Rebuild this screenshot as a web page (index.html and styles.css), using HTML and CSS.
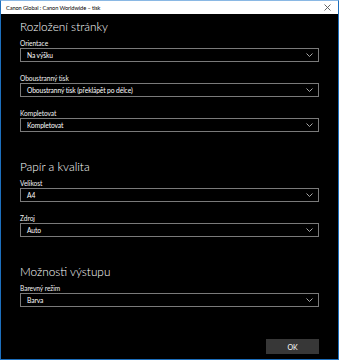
FILE: index.html
```html
<!DOCTYPE html>
<html lang="cs">
<head>
<meta charset="utf-8">
<title>Canon Global : Canon Worldwide – tisk</title>
<link rel="stylesheet" href="styles.css">
</head>
<body>
<div class="window">
  <div class="titlebar">
    <span class="title">Canon Global : Canon Worldwide – tisk</span>
    <svg class="close" width="7" height="7" viewBox="0 0 7 7"><path d="M0.5 0.5 L6.5 6.5 M6.5 0.5 L0.5 6.5" stroke="#555" stroke-width="0.9" fill="none"/></svg>
  </div>
  <div class="content">
    <section class="section">
      <h2 class="heading">Rozložení stránky</h2>
      <div class="field">
        <div class="label">Orientace</div>
        <div class="select"><span>Na výšku</span><svg class="chev" width="7" height="4" viewBox="0 0 7 4"><path d="M0.5 0.5 L3.5 3.5 L6.5 0.5" stroke="#bbb" stroke-width="0.9" fill="none"/></svg></div>
      </div>
      <div class="field">
        <div class="label">Oboustranný tisk</div>
        <div class="select"><span>Oboustranný tisk (překlápět po délce)</span><svg class="chev" width="7" height="4" viewBox="0 0 7 4"><path d="M0.5 0.5 L3.5 3.5 L6.5 0.5" stroke="#bbb" stroke-width="0.9" fill="none"/></svg></div>
      </div>
      <div class="field">
        <div class="label">Kompletovat</div>
        <div class="select"><span>Kompletovat</span><svg class="chev" width="7" height="4" viewBox="0 0 7 4"><path d="M0.5 0.5 L3.5 3.5 L6.5 0.5" stroke="#bbb" stroke-width="0.9" fill="none"/></svg></div>
      </div>
    </section>
    <section class="section">
      <h2 class="heading">Papír a kvalita</h2>
      <div class="field">
        <div class="label">Velikost</div>
        <div class="select"><span>A4</span><svg class="chev" width="7" height="4" viewBox="0 0 7 4"><path d="M0.5 0.5 L3.5 3.5 L6.5 0.5" stroke="#bbb" stroke-width="0.9" fill="none"/></svg></div>
      </div>
      <div class="field">
        <div class="label">Zdroj</div>
        <div class="select"><span>Auto</span><svg class="chev" width="7" height="4" viewBox="0 0 7 4"><path d="M0.5 0.5 L3.5 3.5 L6.5 0.5" stroke="#bbb" stroke-width="0.9" fill="none"/></svg></div>
      </div>
    </section>
    <section class="section">
      <h2 class="heading">Možnosti výstupu</h2>
      <div class="field">
        <div class="label">Barevný režim</div>
        <div class="select"><span>Barva</span><svg class="chev" width="7" height="4" viewBox="0 0 7 4"><path d="M0.5 0.5 L3.5 3.5 L6.5 0.5" stroke="#bbb" stroke-width="0.9" fill="none"/></svg></div>
      </div>
    </section>
  </div>
  <div class="footer">
    <button class="ok">OK</button>
  </div>
</div>
</body>
</html>
```
FILE: styles.css
```css
* { box-sizing: border-box; }
html, body { margin: 0; padding: 0; background: #000; }
body { font-family: Lato, "Open Sans", sans-serif; color: #fff; }
.window {
  width: 339px;
  height: 360px;
  border: 1px solid #1d6fbd;
  border-top-color: #8ab8e4;
  background: #000;
  display: flex;
  flex-direction: column;
}
.titlebar {
  height: 13px;
  background: #fff;
  color: #000;
  display: flex;
  align-items: center;
  justify-content: space-between;
  padding: 0 7px 0 5px;
}
.title { font-size: 5.7px; line-height: 13px; letter-spacing: -0.1px; }
.close { display: block; }
.content {
  padding: 5px 19px 0 19px;
  display: flex;
  flex-direction: column;
  gap: 27px;
  flex: 1;
}
.section { display: flex; flex-direction: column; gap: 11px; }
.heading {
  margin: 0 0 -8px 0;
  font-size: 11.8px;
  line-height: 16px;
  font-weight: 300;
}
.label { font-size: 6.6px; line-height: 10px; letter-spacing: -0.05px; color: #f2f2f2; }
.select {
  height: 14px;
  border: 1px solid #7a7a7a;
  display: flex;
  align-items: center;
  justify-content: space-between;
  padding: 0 5px 0 6px;
  font-size: 6.7px;
  letter-spacing: -0.1px;
}
.chev { display: block; }
.footer {
  display: flex;
  justify-content: flex-end;
  padding: 0 19px 5px 0;
}
.ok {
  width: 53px;
  height: 15px;
  background: #373737;
  border: none;
  color: #fff;
  font-family: Lato, "Open Sans", sans-serif;
  font-size: 7px;
  padding: 0;
}
```
